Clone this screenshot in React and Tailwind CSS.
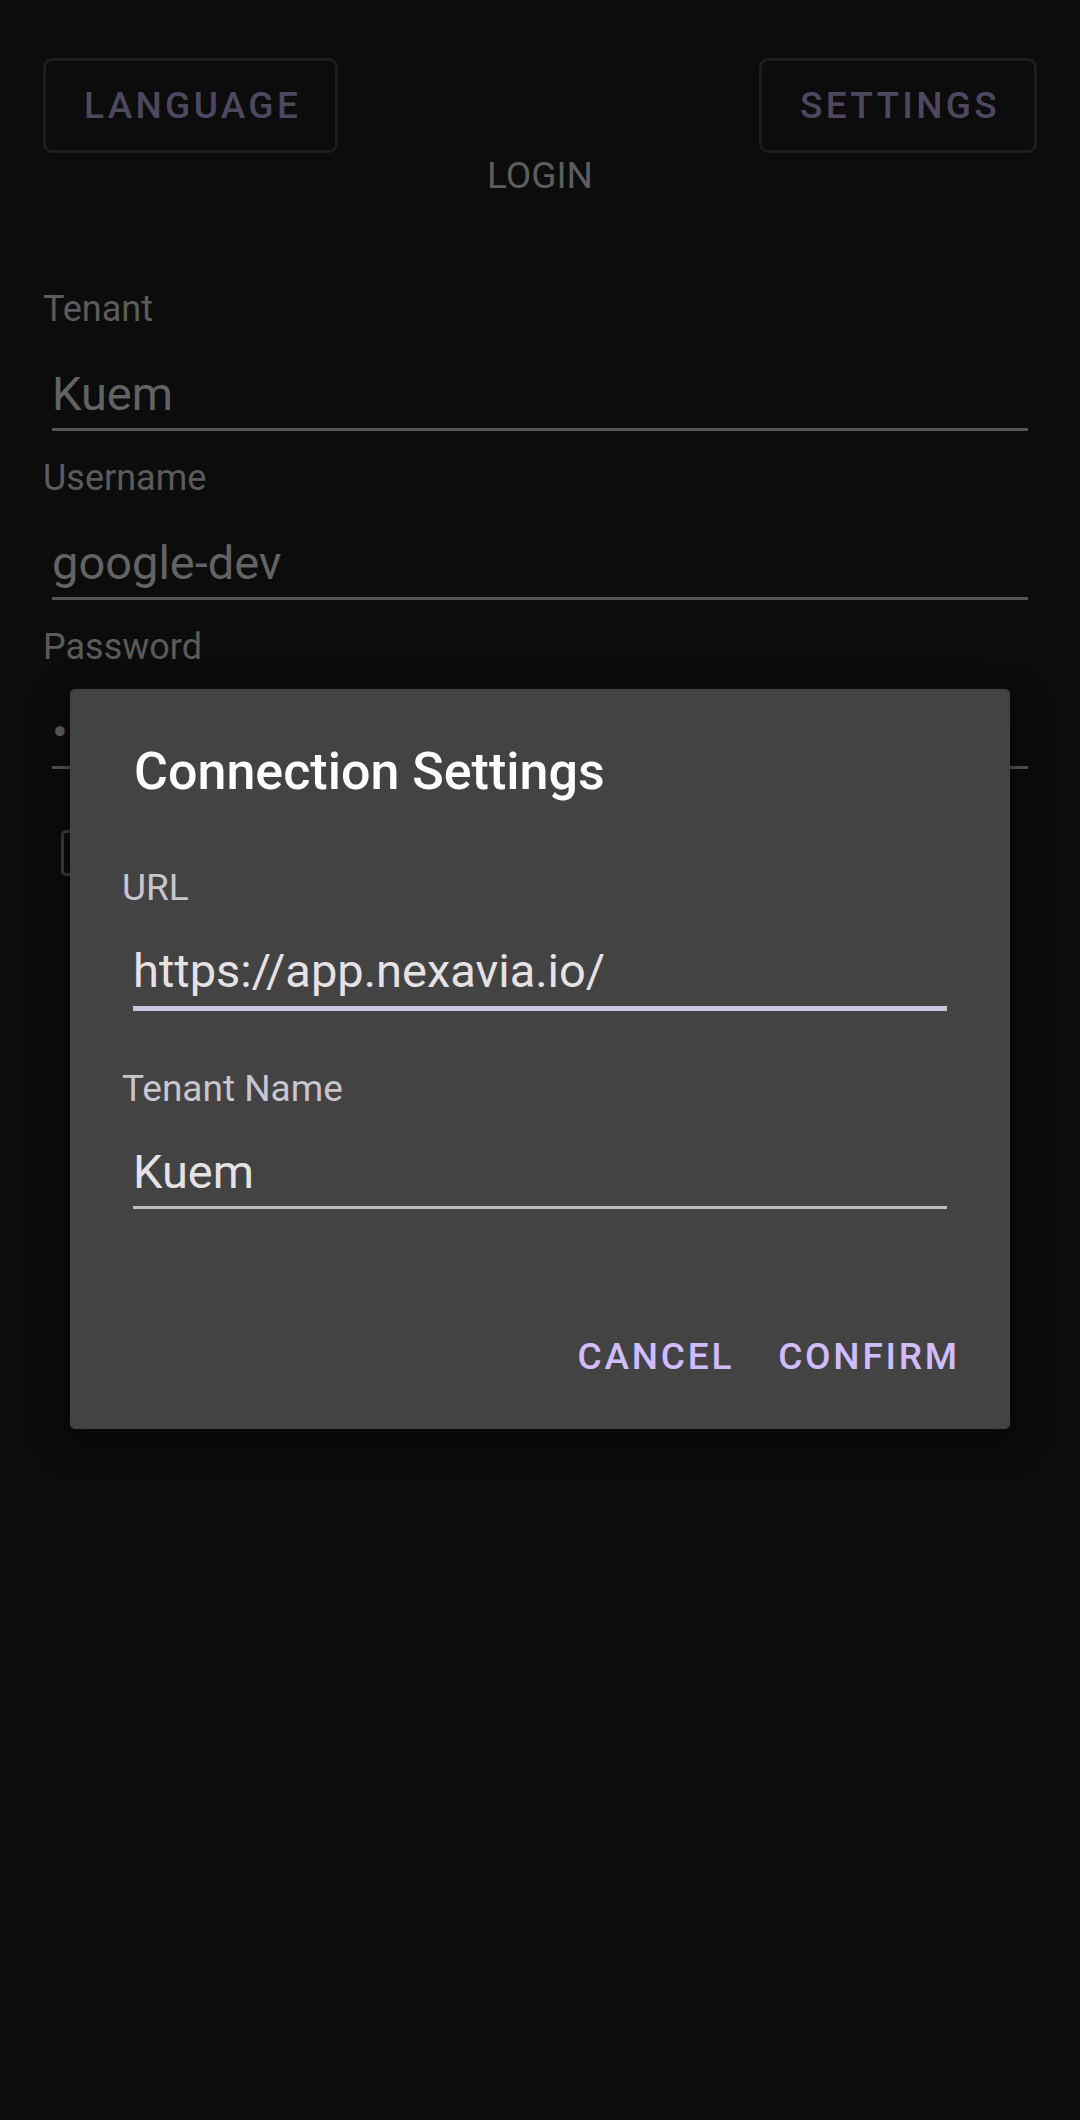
import React from "react";

function OutlineButton({ children }) {
  return (
    <button className="h-[95px] rounded-[9px] border-[3px] border-[#1d1c20] pl-[38px] pr-[34px] text-[37px] font-medium leading-[44px] tracking-[0.09em] text-[#4f4760]">
      {children}
    </button>
  );
}

function Field({ label, value }) {
  return (
    <div className="pb-[25px]">
      <div className="text-[36px] leading-[44px] text-[#5b5b5b]">{label}</div>
      <div className="mx-[9px] mt-[35px] text-[47px] leading-[56px] text-[#636363]">{value}</div>
      <div className="mx-[9px] mt-[6px] h-[3px] bg-[#555555]" />
    </div>
  );
}

function DialogField({ label, value, focused }) {
  return (
    <div>
      <div className="text-[37px] leading-[42px] text-[#cbc4cf]">{label}</div>
      <div className="mx-[11px] mt-[34px] text-[47px] leading-[56px] text-[#e6e1e5]">{value}</div>
      {focused ? (
        <div className="mx-[11px] mt-[7px] h-[5px] bg-[#cbc2db]" />
      ) : (
        <div className="mx-[11px] mt-[6px] h-[3px] bg-[#bdbac0]" />
      )}
    </div>
  );
}

function TextButton({ children }) {
  return (
    <button className="h-[95px] px-[20px] text-[37px] font-medium leading-[44px] tracking-[0.075em] text-[#d0bcff]">
      {children}
    </button>
  );
}

export default function App() {
  return (
    <div className="relative min-h-[2120px] bg-[#0c0c0c] font-['Roboto',sans-serif]">
      <div className="px-[43px] pt-[58px]">
        <div className="flex justify-between">
          <OutlineButton>LANGUAGE</OutlineButton>
          <OutlineButton>SETTINGS</OutlineButton>
        </div>
        <p className="mt-[1px] text-center text-[37px] leading-[44px] text-[#5d5d5d]">LOGIN</p>

        <div className="mt-[89px]">
          <Field label="Tenant" value="Kuem" />
          <Field label="Username" value="google-dev" />
          <Field label="Password" value="•" />
        </div>

        <div className="mt-[36px] pl-[18px]">
          <div className="h-[46px] w-[46px] rounded-[5px] border-[3px] border-[#3e3e43]" />
        </div>
      </div>

      {/* connection settings dialog */}
      <div className="absolute left-[70px] top-[689px] w-[940px] rounded-[5px] bg-[#434343] shadow-[0_12px_36px_rgba(0,0,0,0.55)]">
        <h2 className="pl-[64px] pt-[52px] text-[52px] font-medium leading-[62px] text-white">
          Connection Settings
        </h2>
        <div className="mt-[64px] px-[52px]">
          <DialogField label="URL" value="https://app.nexavia.io/" focused />
          <div className="mt-[57px]">
            <DialogField label="Tenant Name" value="Kuem" />
          </div>
        </div>
        <div className="mt-[100px] flex justify-end gap-[4px] pb-[25px] pr-[30px]">
          <TextButton>CANCEL</TextButton>
          <TextButton>CONFIRM</TextButton>
        </div>
      </div>
    </div>
  );
}
